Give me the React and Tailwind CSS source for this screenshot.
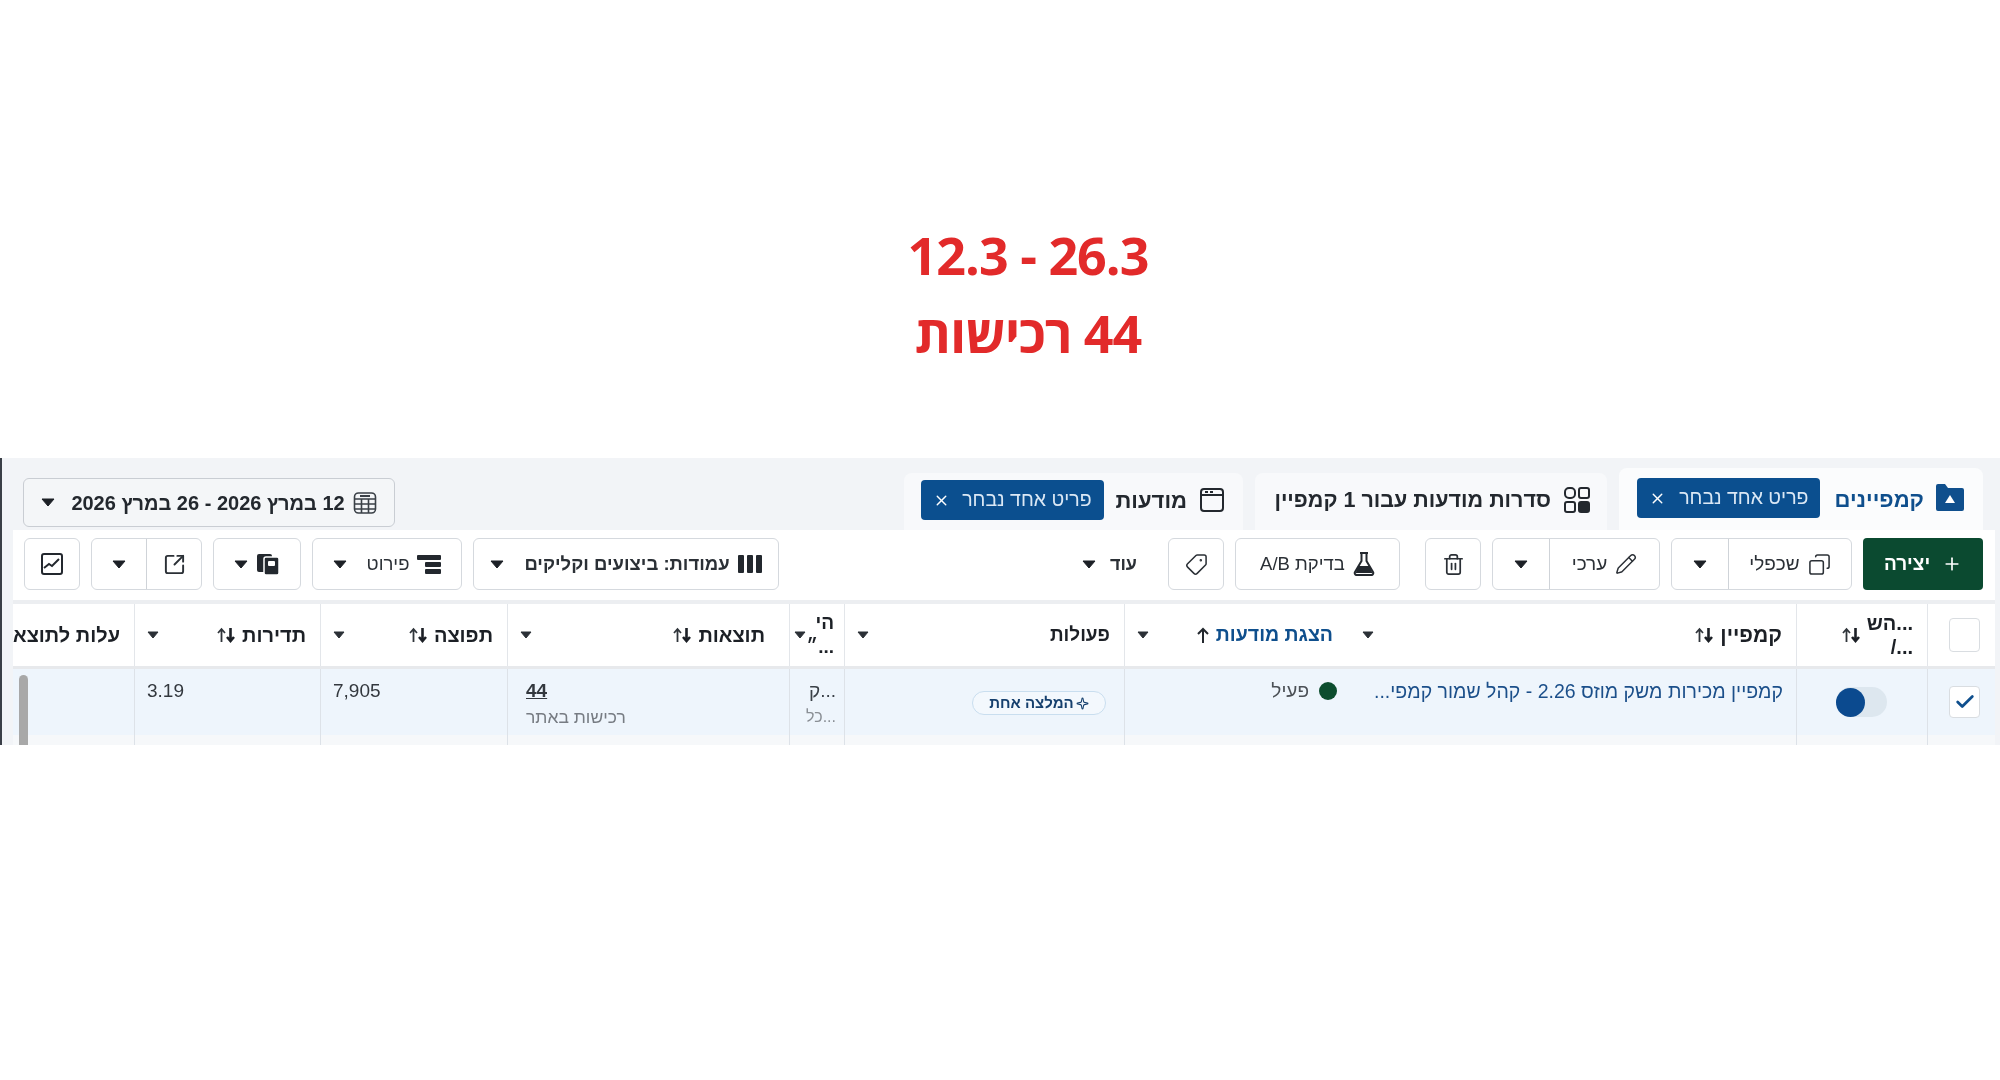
import { Plus, Copy, Pencil, Trash2, Tag, SquareArrowOutUpRight, Check, X, Sparkle } from 'lucide-react';

const Caret = ({ className = '' }) => (
  <svg width="14" height="9" viewBox="0 0 14 9" className={`shrink-0 ${className}`}>
    <path d="M1 1h12L7 8z" fill="#1c2026" stroke="#1c2026" strokeLinejoin="round" />
  </svg>
);

const SmallCaret = () => (
  <svg width="12" height="8" viewBox="0 0 12 8" className="shrink-0">
    <path d="M1 1h10L6 7z" fill="#2b3036" stroke="#2b3036" strokeLinejoin="round" />
  </svg>
);

const SortIcon = () => (
  <svg width="20" height="18" viewBox="0 0 20 18" className="shrink-0">
    <path d="M5.5 16V4M2 7l3.5-4L9 7" fill="none" stroke="#30353b" strokeWidth="1.8" />
    <path d="M14.5 2v12M11 11l3.5 4 3.5-4" fill="none" stroke="#1c2026" strokeWidth="2.6" />
  </svg>
);

const FolderIcon = () => (
  <svg width="30" height="29" viewBox="0 0 30 29">
    <path d="M1 3a2 2 0 0 1 2-2h7l3 4h14a2 2 0 0 1 2 2v19a2 2 0 0 1-2 2H3a2 2 0 0 1-2-2z" fill="#0f4f8d" />
    <path d="M15 12l5 8H10z" fill="#fff" />
  </svg>
);

const AdSetIcon = () => (
  <svg width="28" height="28" viewBox="0 0 28 28" fill="none" stroke="#23282e" strokeWidth="2">
    <rect x="2" y="2" width="10" height="10" rx="4" />
    <rect x="16" y="2" width="10" height="10" rx="2" />
    <rect x="2" y="16" width="10" height="10" rx="2" />
    <rect x="16" y="16" width="10" height="10" rx="2" fill="#23282e" />
  </svg>
);

const AdIcon = () => (
  <svg width="26" height="26" viewBox="0 0 26 26" fill="none" stroke="#23282e" strokeWidth="2">
    <rect x="2" y="2" width="22" height="22" rx="3" />
    <path d="M2 8h22M6 5h3M11 5h3" />
  </svg>
);

const CalendarIcon = () => (
  <svg width="24" height="24" viewBox="0 0 24 24" fill="none" stroke="#3a4047" strokeWidth="1.6">
    <rect x="1.5" y="2" width="21" height="20" rx="4" />
    <path d="M1.5 8h21M1.5 13h21M1.5 18h21M8.5 8v14M15.5 8v14" />
    <path d="M7 5h10" strokeWidth="2" />
  </svg>
);

const ColumnsIcon = () => (
  <svg width="24" height="20" viewBox="0 0 24 20" fill="#23282e">
    <rect x="0" y="1" width="6" height="18" rx="1" />
    <rect x="9" y="1" width="6" height="18" rx="1" />
    <rect x="18" y="1" width="6" height="18" rx="1" />
  </svg>
);

const BreakdownIcon = () => (
  <svg width="24" height="20" viewBox="0 0 24 20" fill="#23282e">
    <rect x="0" y="1" width="24" height="5" rx="1" />
    <rect x="8" y="8" width="16" height="5" rx="1" />
    <rect x="8" y="15" width="16" height="5" rx="1" />
  </svg>
);

const ReportsIcon = () => (
  <svg width="24" height="24" viewBox="0 0 24 24" fill="#23282e">
    <rect x="1" y="2" width="15" height="18" rx="2" />
    <rect x="8" y="5" width="15" height="18" rx="2" stroke="#fff" strokeWidth="1.5" />
    <rect x="12" y="9" width="7" height="5" rx="1" fill="#fff" />
  </svg>
);

const FlaskIcon = () => (
  <svg width="22" height="24" viewBox="0 0 22 24">
    <path d="M7 1h8M8.500 1v8L2 20a2 2 0 0 0 2 3h14a2 2 0 0 0 2-3L13.500 9V1" fill="none" stroke="#23282e" strokeWidth="2" />
    <path d="M5.500 14h11l3 7H2.500z" fill="#23282e" />
  </svg>
);

const ChartIcon = () => (
  <svg width="24" height="24" viewBox="0 0 24 24" fill="none" stroke="#23282e" strokeWidth="2">
    <rect x="2" y="2" width="20" height="20" rx="2" />
    <path d="M4 16l5-4 3 2 7-7" />
  </svg>
);

const Pill = ({ className = '' }) => (
  <div className={`flex h-10 w-[183px] shrink-0 items-center justify-between rounded bg-[#0b4f8f] px-3 text-[19.500px] text-[#dbe8f5] ${className}`}>
    <span>פריט אחד נבחר</span>
    <X size={17} strokeWidth={2} className="text-white" />
  </div>
);

const ToolButton = ({ className = '', children }) => (
  <div className={`flex h-[52px] shrink-0 items-center justify-center gap-2 rounded-md border border-[#d5d9de] bg-white text-[18.500px] font-bold text-[#2b3036] ${className}`}>
    {children}
  </div>
);

const SplitButton = ({ mainClass, children, caretClass = 'w-[56px]' }) => (
  <div className="flex h-[52px] shrink-0 rounded-md border border-[#d5d9de] bg-white text-[19px] text-[#2b3036]">
    <div className={`flex items-center justify-center gap-2 border-l border-[#cfd3d8] ${mainClass}`}>{children}</div>
    <div className={`flex items-center justify-center ${caretClass}`}><Caret /></div>
  </div>
);

const HeaderCell = ({ label, sort = true, className = 'pr-[14px]', labelClass = 'text-[20px] text-[#1c2026]', icon }) => (
  <div className={`flex h-full min-w-0 items-center justify-between border-l border-[#e3e6ea] pl-3 ${className}`}>
    <div className="flex items-center gap-[6px]">
      <span className={`whitespace-nowrap font-bold ${labelClass}`}>{label}</span>
      {sort && <SortIcon />}
      {icon}
    </div>
    <SmallCaret />
  </div>
);

const NumberCell = ({ value, sub, className = 'pl-[12px]' }) => (
  <div className={`flex h-full flex-col items-end border-l border-[#dde2e8] pt-[10px] ${className}`}>
    <span className={`text-[19px] leading-6 text-[#33383e] ${sub ? 'font-bold underline' : ''}`}>{value}</span>
    {sub && <span className="mt-1 text-[17.500px] leading-5 text-[#777c83]">{sub}</span>}
  </div>
);

export default function App() {
  return (
    <div dir="rtl" className="min-h-[1080px] bg-white font-['Liberation_Sans','DejaVu_Sans',sans-serif]">
      <div className="h-[458px] pt-[216px] pl-[56px] text-center font-['Open_Sans','Liberation_Sans',sans-serif] text-[52px] font-bold leading-[78px] tracking-[-1px] text-[#e22a2a]">
        <div>26.3 - 12.3</div>
        <div>44 רכישות</div>
      </div>

      <div className="relative h-[287px] overflow-hidden border-l-2 border-[#3a3f47] bg-[#f2f4f7] blur-[0.7px]">
        {/* tabs */}
        <div className="flex h-[72px] items-end gap-[12px] pr-[17px] pl-[21px]">
          <div className="flex h-[62px] w-[364px] items-start gap-[11px] rounded-t-lg bg-[#fbfcfd] pt-[10px] pr-[18px]">
            <div className="mt-[5px]"><FolderIcon /></div>
            <span className="mt-[5px] ml-[3px] whitespace-nowrap text-[22px] font-bold text-[#0f4f8d]">קמפיינים</span>
            <Pill />
          </div>
          <div className="flex h-[57px] w-[352px] items-center gap-[12px] rounded-t-lg bg-[#f8f9fb] pr-4 pb-[3px]">
            <AdSetIcon />
            <span className="whitespace-nowrap text-[21.500px] font-bold text-[#23282e]">סדרות מודעות עבור 1 קמפיין</span>
          </div>
          <div className="flex h-[57px] w-[339px] items-center gap-[12px] rounded-t-lg bg-[#f8f9fb] pr-[18px] pb-[3px]">
            <AdIcon />
            <span className="text-[22px] font-bold text-[#23282e]">מודעות</span>
            <Pill />
          </div>
          <div className="mr-auto mb-[3px] flex h-[49px] w-[372px] items-center justify-center gap-2 rounded-md border border-[#c9cdd3] bg-[#f4f6f8] text-[20px] font-bold text-[#23282e]">
            <CalendarIcon />
            <span>12 במרץ 2026 - 26 במרץ 2026</span>
            <Caret className="mr-2" />
          </div>
        </div>

        <div className="mr-[5px] ml-[11px] bg-white">
          {/* toolbar */}
          <div className="flex h-[74px] items-start gap-[11px] border-b-4 border-[#eceef1] pt-2 pr-[12px] pl-[11px]">
            <div className="flex h-[52px] w-[120px] shrink-0 items-center justify-center gap-3 rounded bg-[#0b4a30] text-[19px] font-bold text-white">
              <Plus size={20} strokeWidth={2} />
              <span>יצירה</span>
            </div>
            <SplitButton mainClass="w-[123px]">
              <Copy size={23} strokeWidth={1.6} className="scale-x-[-1]" />
              <span>שכפלי</span>
            </SplitButton>
            <SplitButton mainClass="w-[110px]">
              <Pencil size={22} strokeWidth={1.6} />
              <span>ערכי</span>
            </SplitButton>
            <ToolButton className="w-[56px]"><Trash2 size={23} strokeWidth={1.8} /></ToolButton>
            <ToolButton className="mr-[14px] w-[165px]">
              <FlaskIcon />
              <span className="font-normal">בדיקת A/B</span>
            </ToolButton>
            <ToolButton className="w-[56px]"><Tag size={23} strokeWidth={1.6} className="scale-x-[-1]" /></ToolButton>
            <div className="mr-[20px] flex h-[52px] items-center gap-[14px] text-[18px] font-bold text-[#2b3036]">
              <span>עוד</span>
              <Caret />
            </div>
            <ToolButton className="mr-auto w-[306px]">
              <ColumnsIcon />
              <span>עמודות: ביצועים וקליקים</span>
              <Caret className="mr-3" />
            </ToolButton>
            <ToolButton className="w-[150px]">
              <BreakdownIcon />
              <span className="font-normal">פירוט</span>
              <Caret className="mr-3" />
            </ToolButton>
            <ToolButton className="w-[88px]">
              <ReportsIcon />
              <Caret />
            </ToolButton>
            <SplitButton mainClass="w-[55px]" caretClass="w-[54px]">
              <SquareArrowOutUpRight size={23} strokeWidth={2} />
            </SplitButton>
            <ToolButton className="w-[56px]"><ChartIcon /></ToolButton>
          </div>

          {/* table header */}
          <div className="grid h-[65px] grid-cols-[68px_131px_446px_226px_280px_55px_282px_187px_186px_121px] border-b-[3px] border-[#e7e9ec]">
            <div className="flex h-full items-center justify-center border-l border-[#e3e6ea] pl-[6px]">
              <div className="h-[34px] w-[31px] rounded border border-[#d9dde1] bg-white" />
            </div>
            <div className="flex h-full items-center justify-between border-l border-[#e3e6ea] pr-[14px] pl-[44px]">
              <div className="text-[20px] font-bold leading-[24px] text-[#1c2026]">
                <div>...הש</div>
                <div>.../</div>
              </div>
              <SortIcon />
            </div>
            <HeaderCell label="קמפיין" className="border-l-0 pr-[14px]" labelClass="text-[21px] text-[#1c2026]" />
            <HeaderCell
              label="הצגת מודעות"
              sort={false}
              labelClass="text-[19.500px] text-[#0f4f8d]"
              className="pr-[17px]"
              icon={
                <svg width="14" height="18" viewBox="0 0 14 18" className="shrink-0">
                  <path d="M7 17V3M2 8l5-5 5 5" fill="none" stroke="#23282e" strokeWidth="2" />
                </svg>
              }
            />
            <HeaderCell label="פעולות" sort={false} labelClass="text-[19px] text-[#1c2026]" />
            <div className="flex h-full items-center justify-between overflow-hidden border-l border-[#e3e6ea] pr-[10px] pl-1">
              <div className="text-[19px] font-bold leading-[24px] text-[#1c2026]">
                <div>הי</div>
                <div>...״</div>
              </div>
              <SmallCaret />
            </div>
            <HeaderCell label="תוצאות" className="pr-[24px]" />
            <HeaderCell label="תפוצה" />
            <HeaderCell label="תדירות" />
            <div className="flex h-full items-center overflow-hidden pr-[14px]">
              <span className="whitespace-nowrap text-[20px] font-bold text-[#1c2026]">עלות לתוצאה</span>
            </div>
          </div>

          {/* selected row */}
          <div className="grid h-[66px] grid-cols-[68px_131px_446px_226px_280px_55px_282px_187px_186px_121px] bg-[#eef5fc]">
            <div className="flex h-full items-center justify-center border-l border-[#dde2e8] pb-[1px] pl-[6px]">
              <div className="flex h-[32px] w-[31px] items-center justify-center rounded border border-[#d9dde1] bg-white">
                <Check size={22} strokeWidth={3} className="text-[#0f4f8d]" />
              </div>
            </div>
            <div className="flex h-full items-center justify-start border-l border-[#dde2e8] pr-[40px]">
              <div className="flex h-[30px] w-[51px] items-center justify-end rounded-full bg-[#dde7ef]">
                <div className="h-[29px] w-[29px] rounded-full bg-[#0b4a8f]" />
              </div>
            </div>
            <div className="pt-[10px] pr-[13px]">
              <div className="whitespace-nowrap text-[19.500px] leading-6 text-[#1b4f8a]">קמפיין מכירות משק מוזס 2.26 - קהל שמור קמפי...</div>
            </div>
            <div className="flex items-start gap-[10px] border-l border-[#dde2e8] pt-[13px] pr-[13px]">
              <div className="h-[18px] w-[18px] rounded-full bg-[#0c4d2e]" />
              <span className="-mt-[3px] text-[19px] leading-6 text-[#4b5056]">פעיל</span>
            </div>
            <div className="flex border-l border-[#dde2e8] pt-[22px] pr-[18px]">
              <div className="flex h-[24px] w-[134px] items-center justify-center gap-[2px] rounded-full border border-[#c9deef] bg-[#f3f8fd] text-[15px] font-bold text-[#16406e]">
                <Sparkle size={13} strokeWidth={2} />
                <span>המלצה אחת</span>
              </div>
            </div>
            <div className="border-l border-[#dde2e8] pt-[10px] pr-[8px]">
              <div className="text-[19px] leading-6 text-[#3a4047]">...ק</div>
              <div className="mt-1 text-[16px] leading-5 text-[#8a8f95]">...כל</div>
            </div>
            <NumberCell value="44" sub="רכישות באתר" className="pl-[18px]" />
            <NumberCell value="7,905" />
            <NumberCell value="3.19" />
            <div />
          </div>

          {/* next row, cut off by the crop */}
          <div className="grid h-[30px] grid-cols-[68px_131px_446px_226px_280px_55px_282px_187px_186px_121px] bg-[#f6f8fa]">
            <div className="border-l border-[#dde2e8]" />
            <div className="border-l border-[#dde2e8]" />
            <div />
            <div className="border-l border-[#dde2e8]" />
            <div className="border-l border-[#dde2e8]" />
            <div className="border-l border-[#dde2e8]" />
            <div className="border-l border-[#dde2e8]" />
            <div className="border-l border-[#dde2e8]" />
            <div className="border-l border-[#dde2e8]" />
            <div />
          </div>
        </div>

        {/* table scrollbar */}
        <div className="absolute bottom-0 left-[17px] h-[70px] w-[9px] rounded-t-full bg-[#a8a8a8]" />
      </div>
    </div>
  );
}
